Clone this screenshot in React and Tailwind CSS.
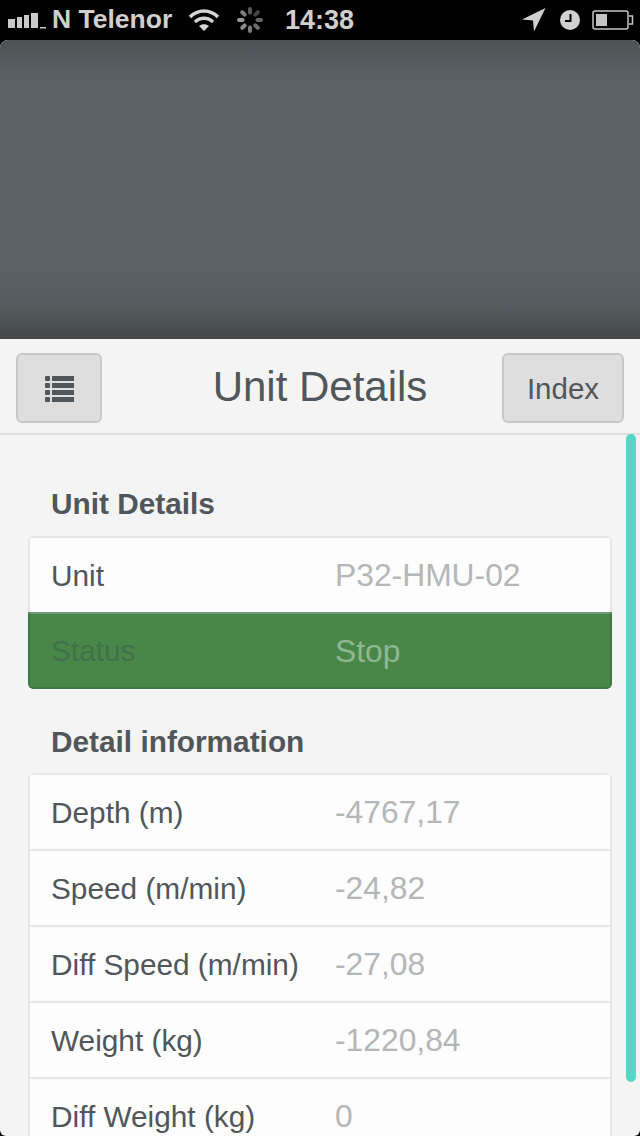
const detailRows = [
  { label: "Depth (m)", value: "-4767,17" },
  { label: "Speed (m/min)", value: "-24,82" },
  { label: "Diff Speed (m/min)", value: "-27,08" },
  { label: "Weight (kg)", value: "-1220,84" },
  { label: "Diff Weight (kg)", value: "0" },
];

const SignalIcon = () => (
  <svg width="38" height="20" viewBox="0 0 38 20" fill="#c9c9c9">
    <rect x="0" y="9" width="7" height="9" />
    <rect x="9" y="7" width="5" height="11" />
    <rect x="16" y="5" width="5" height="13" />
    <rect x="23" y="3" width="7" height="15" />
    <rect x="32" y="17" width="6" height="1.5" />
  </svg>
);

const WifiIcon = () => (
  <svg width="32" height="24" viewBox="0 0 32 24" fill="none" stroke="#d4d4d4" strokeWidth="3.4">
    <path d="M2 9 C10 1 22 1 30 9" />
    <path d="M7 14 C12 9 20 9 25 14" />
    <path d="M16 23 L11 18 C14 15.5 18 15.5 21 18 Z" fill="#d4d4d4" stroke="none" />
  </svg>
);

const Spinner = () => {
  const spokes = [
    [0, "#5a5a5a"], [45, "#444"], [90, "#666"], [135, "#6e6e6e"],
    [180, "#7a7a7a"], [225, "#8a8a8a"], [270, "#9a9a9a"], [315, "#7d7d7d"],
  ];
  return (
    <svg width="28" height="28" viewBox="0 0 28 28">
      {spokes.map(([angle, color]) => (
        <rect key={angle} x="12" y="1" width="4" height="7.5" rx="2" fill={color} transform={`rotate(${angle} 14 14)`} />
      ))}
    </svg>
  );
};

const ArrowIcon = () => (
  <svg width="24" height="24" viewBox="0 0 24 24" fill="#cfcfcf">
    <path d="M0 11.5 L23.5 0 L12 23.5 L11 12.5 Z" />
  </svg>
);

const ClockIcon = () => (
  <svg width="20" height="20" viewBox="0 0 20 20">
    <circle cx="10" cy="10" r="10" fill="#d0d0d0" />
    <path d="M10.5 4 V11 H5" fill="none" stroke="#000" strokeWidth="2" />
  </svg>
);

const BatteryIcon = () => (
  <svg width="42" height="20" viewBox="0 0 42 20">
    <rect x="1" y="1" width="35" height="18" rx="2" fill="none" stroke="#c4c4c4" strokeWidth="1.5" />
    <rect x="4" y="4" width="11" height="12" fill="#c4c4c4" />
    <path d="M37 6 H40.5 V14 H37" fill="none" stroke="#c4c4c4" strokeWidth="1.5" />
  </svg>
);

const ListIcon = () => (
  <svg width="29" height="27" viewBox="0 0 29 27" fill="#50565a">
    <rect x="0" y="1" width="5" height="5" rx="1" />
    <rect x="0" y="8" width="5" height="5" rx="1" />
    <rect x="0" y="15" width="5" height="5" rx="1" />
    <rect x="0" y="22" width="5" height="5" rx="1" />
    <rect x="7" y="1" width="22" height="5" />
    <rect x="7" y="8" width="22" height="5" />
    <rect x="7" y="15" width="22" height="5" />
    <rect x="7" y="22" width="22" height="5" />
  </svg>
);

const Row = ({ label, value }) => (
  <div className="flex h-[76px] items-center border-x-2 border-t-2 border-[#e6e6e6] bg-[#fdfdfd] pl-[21px] pt-[2px]">
    <span className="w-[284px] shrink-0 text-[#50565a]">{label}</span>
    <span className="text-[31.8px] text-[#b4b6b7]">{value}</span>
  </div>
);

export default function App() {
  return (
    <div className="relative h-[1136px] w-[640px] overflow-hidden bg-black font-['Liberation_Sans',Arial,sans-serif]">
      <div className="flex h-[40px] items-center text-[#cfcfcf]">
        <div className="ml-[8px] flex w-[44px] shrink-0 items-center"><SignalIcon /></div>
        <span className="w-[136px] shrink-0 text-[26.5px] font-bold">N Telenor</span>
        <WifiIcon />
        <div className="ml-[16px]"><Spinner /></div>
        <span className="ml-[21px] text-[27px] font-bold">14:38</span>
        <div className="ml-auto flex items-center">
          <ArrowIcon />
          <div className="ml-[14px]"><ClockIcon /></div>
          <div className="ml-[12px] mr-[6px]"><BatteryIcon /></div>
        </div>
      </div>

      <div className="h-[1096px] overflow-hidden rounded-t-[8px] rounded-b-[6px] bg-[#f4f4f4]">
        <div className="h-[299px] bg-[linear-gradient(to_bottom,#4c5154_0%,#5a6164_12%,#5c6366_70%,#565c5f_88%,#44484b_100%)]" />

        <div className="grid h-[96px] grid-cols-[1fr_auto_1fr] items-center border-b-2 border-[#e0e0e0] px-[16px] pt-[4px]">
          <button className="flex h-[70px] w-[86px] items-center justify-center justify-self-start rounded-[6px] border-2 border-[#c8c8c8] bg-[#dedede]">
            <ListIcon />
          </button>
          <h1 className="mb-[3px] text-[42px] font-normal text-[#50565a]">Unit Details</h1>
          <button className="h-[70px] w-[122px] justify-self-end rounded-[6px] border-2 border-[#c8c8c8] bg-[#dedede] pt-[3px] text-[29.5px] text-[#50565a]">
            Index
          </button>
        </div>

        <div className="px-[28px] text-[29.8px]">
          <h2 className="ml-[23px] flex h-[101px] items-end pb-[9px] text-[29.8px] font-bold text-[#50565a]">Unit Details</h2>
          <div className="overflow-hidden rounded-[6px]">
            <Row label="Unit" value="P32-HMU-02" />
            <div className="flex h-[77px] items-center border-2 border-t-[#6f9a78] border-x-[#3f7a46] border-b-[#3f7a46] bg-[#488748] pl-[21px] pt-[2px]">
              <span className="w-[284px] shrink-0 text-[#41704a]">Status</span>
              <span className="text-[31.8px] text-[#8fb792]">Stop</span>
            </div>
          </div>
          <h2 className="ml-[23px] flex h-[84px] items-end pb-[8px] text-[29.8px] font-bold text-[#50565a]">Detail information</h2>
          <div className="overflow-hidden rounded-[6px]">
            {detailRows.map((row) => (
              <Row key={row.label} label={row.label} value={row.value} />
            ))}
          </div>
        </div>
      </div>

      <div className="absolute left-[626px] top-[434px] h-[648px] w-[10px] rounded-[5px] bg-[#55d6c6]" />
    </div>
  );
}
